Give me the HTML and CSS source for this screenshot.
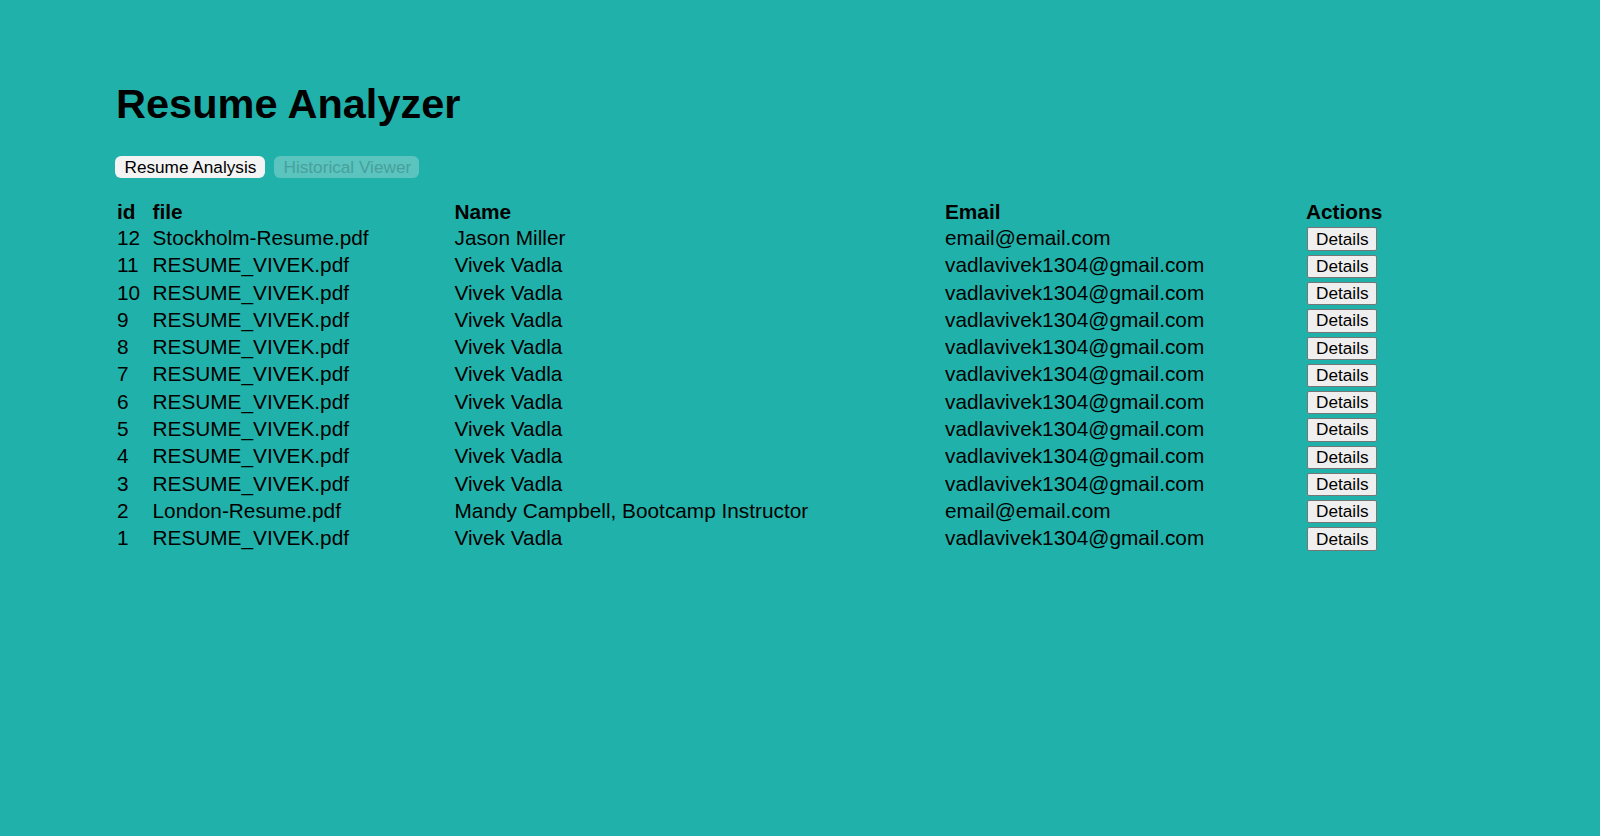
FILE: index.html
```html
<!DOCTYPE html>
<html lang="en">
<head>
<meta charset="utf-8">
<title>Resume Analyzer</title>
<link rel="stylesheet" href="styles.css">
</head>
<body>
<div class="page">
  <h1 class="title">Resume Analyzer</h1>
  <div class="tabs">
    <button class="tab tab-active">Resume Analysis</button>
    <button class="tab tab-inactive">Historical Viewer</button>
  </div>
  <table class="results">
    <colgroup>
      <col class="c-id">
      <col class="c-file">
      <col class="c-name">
      <col class="c-email">
      <col class="c-actions">
    </colgroup>
    <thead>
      <tr><th>id</th><th>file</th><th>Name</th><th>Email</th><th>Actions</th></tr>
    </thead>
    <tbody>
      <tr><td>12</td><td>Stockholm-Resume.pdf</td><td>Jason Miller</td><td>email@email.com</td><td><button class="details">Details</button></td></tr>
      <tr><td>11</td><td>RESUME_VIVEK.pdf</td><td>Vivek Vadla</td><td>vadlavivek1304@gmail.com</td><td><button class="details">Details</button></td></tr>
      <tr><td>10</td><td>RESUME_VIVEK.pdf</td><td>Vivek Vadla</td><td>vadlavivek1304@gmail.com</td><td><button class="details">Details</button></td></tr>
      <tr><td>9</td><td>RESUME_VIVEK.pdf</td><td>Vivek Vadla</td><td>vadlavivek1304@gmail.com</td><td><button class="details">Details</button></td></tr>
      <tr><td>8</td><td>RESUME_VIVEK.pdf</td><td>Vivek Vadla</td><td>vadlavivek1304@gmail.com</td><td><button class="details">Details</button></td></tr>
      <tr><td>7</td><td>RESUME_VIVEK.pdf</td><td>Vivek Vadla</td><td>vadlavivek1304@gmail.com</td><td><button class="details">Details</button></td></tr>
      <tr><td>6</td><td>RESUME_VIVEK.pdf</td><td>Vivek Vadla</td><td>vadlavivek1304@gmail.com</td><td><button class="details">Details</button></td></tr>
      <tr><td>5</td><td>RESUME_VIVEK.pdf</td><td>Vivek Vadla</td><td>vadlavivek1304@gmail.com</td><td><button class="details">Details</button></td></tr>
      <tr><td>4</td><td>RESUME_VIVEK.pdf</td><td>Vivek Vadla</td><td>vadlavivek1304@gmail.com</td><td><button class="details">Details</button></td></tr>
      <tr><td>3</td><td>RESUME_VIVEK.pdf</td><td>Vivek Vadla</td><td>vadlavivek1304@gmail.com</td><td><button class="details">Details</button></td></tr>
      <tr><td>2</td><td>London-Resume.pdf</td><td>Mandy Campbell, Bootcamp Instructor</td><td>email@email.com</td><td><button class="details">Details</button></td></tr>
      <tr><td>1</td><td>RESUME_VIVEK.pdf</td><td>Vivek Vadla</td><td>vadlavivek1304@gmail.com</td><td><button class="details">Details</button></td></tr>
    </tbody>
  </table>
</div>
</body>
</html>
```
FILE: styles.css
```css
html, body {
  margin: 0;
  padding: 0;
  background: #20b2aa;
  height: 100%;
}
body {
  font-family: "Liberation Sans", Arial, sans-serif;
  color: #000;
}
.page {
  padding: 81px 0 0 117px;
}
.title {
  margin: 0 0 0 -1px;
  font-size: 41.5px;
  line-height: 46px;
  font-weight: bold;
}
.tabs {
  display: flex;
  gap: 9.7px;
  margin: 29px 0 0 -1.7px;
}
.tab {
  font-family: "Liberation Sans", Arial, sans-serif;
  font-size: 17.2px;
  height: 21.5px;
  line-height: 19px;
  padding: 1px 8.3px 0 9.2px;
  border: none;
  border-radius: 6px;
  cursor: pointer;
}
.tab-active {
  background: #f4f4f4;
  color: #000;
}
.tab-inactive {
  background: #5bc4be;
  color: #47a09b;
}
.results {
  margin-top: 21.5px;
  border-collapse: collapse;
  border-spacing: 0;
  table-layout: fixed;
  width: 1269px;
  font-size: 20.8px;
}
.c-id { width: 35.5px; }
.c-file { width: 302px; }
.c-name { width: 490.5px; }
.c-email { width: 361px; }
.c-actions { width: 80px; }
.results th,
.results td {
  padding: 0;
  text-align: left;
  vertical-align: middle;
  line-height: 23px;
  white-space: nowrap;
}
.results th {
  font-weight: bold;
  height: 25px;
}
.results td {
  height: 27.27px;
}
.details {
  display: block;
  margin: 3px 0 0 1.3px;
  width: 70px;
  height: 23.3px;
  box-sizing: border-box;
  padding: 0;
  font-family: "Liberation Sans", Arial, sans-serif;
  font-size: 17.2px;
  line-height: 19px;
  color: #000;
  background: #efefef;
  border: 1.25px solid #767676;
  border-radius: 2px;
  cursor: pointer;
}
```
